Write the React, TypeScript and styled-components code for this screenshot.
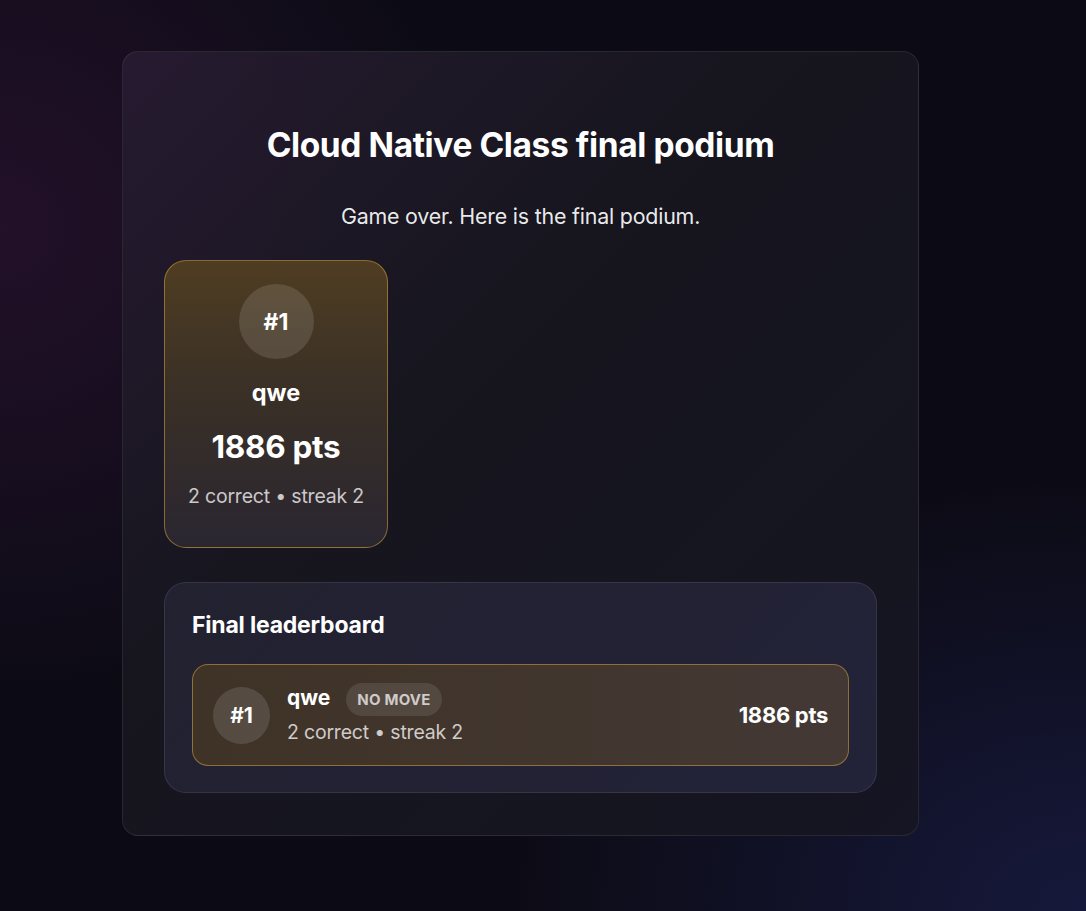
import React from "react";
import styled, { createGlobalStyle } from "styled-components";

const Global = createGlobalStyle`
  html, body { margin: 0; padding: 0; }
  body {
    min-height: 911px;
    background:
      radial-gradient(ellipse 650px 650px at 0% 25%, rgba(50, 20, 55, 0.6), transparent 72%),
      radial-gradient(ellipse 800px 600px at 100% 100%, rgba(28, 32, 80, 0.65), transparent 72%),
      #0c0b15;
    font-family: Inter, "Noto Sans", sans-serif;
    color: #fff;
  }
`;

const Page = styled.div`
  padding: 51px 0 40px 122px;
`;

const Card = styled.main`
  width: 797px;
  box-sizing: border-box;
  border: 1px solid rgba(255, 255, 255, 0.08);
  border-radius: 16px;
  background: linear-gradient(135deg, rgba(40, 28, 50, 0.9) 0%, rgba(24, 23, 32, 0.9) 40%, rgba(22, 22, 34, 0.9) 100%);
  padding: 73px 41px 42px;
  display: flex;
  flex-direction: column;
`;

const Title = styled.h1`
  margin: 0;
  text-align: center;
  font-size: 33.5px;
  font-weight: 700;
  letter-spacing: -0.4px;
  line-height: 40px;
`;

const Subtitle = styled.p`
  margin: 37px 0 0;
  text-align: center;
  font-size: 21.4px;
  line-height: 28px;
  color: rgba(255, 255, 255, 0.92);
  letter-spacing: -0.2px;
`;

const PodiumRow = styled.div`
  display: flex;
  gap: 16px;
  margin-top: 30px;
`;

const PodiumCard = styled.div`
  width: 224px;
  height: 288px;
  box-sizing: border-box;
  border-radius: 22px;
  border: 1px solid rgba(196, 152, 62, 0.6);
  background: linear-gradient(180deg, #4f3d22 0%, #3a3026 45%, #2a2631 100%);
  display: flex;
  flex-direction: column;
  align-items: center;
  padding-top: 23px;
`;

const RankCircle = styled.div<{ $size: number; $font: number }>`
  width: ${(p) => p.$size}px;
  height: ${(p) => p.$size}px;
  border-radius: 50%;
  background: rgba(255, 255, 255, 0.12);
  display: flex;
  align-items: center;
  justify-content: center;
  font-weight: 700;
  font-size: ${(p) => p.$font}px;
  flex-shrink: 0;
`;

const PodiumName = styled.div`
  margin-top: 20px;
  font-size: 23.5px;
  font-weight: 700;
  line-height: 28px;
`;

const PodiumPoints = styled.div`
  margin-top: 22px;
  font-size: 31.5px;
  font-weight: 700;
  line-height: 36px;
  letter-spacing: -0.3px;
`;

const Stats = styled.div<{ $size: number }>`
  font-size: ${(p) => p.$size}px;
  color: rgba(255, 255, 255, 0.75);
  line-height: 24px;
  letter-spacing: -0.2px;
`;

const PodiumStats = styled(Stats)`
  margin-top: 19px;
`;

const Board = styled.section`
  margin-top: 34px;
  border-radius: 22px;
  border: 1px solid rgba(255, 255, 255, 0.09);
  background: linear-gradient(135deg, rgba(80, 75, 110, 0.22), rgba(70, 72, 120, 0.28));
  padding: 27px 27px 26px;
`;

const BoardTitle = styled.h2`
  margin: 0;
  font-size: 23px;
  font-weight: 700;
  line-height: 30px;
  letter-spacing: -0.2px;
`;

const Row = styled.div`
  margin-top: 24px;
  height: 102px;
  box-sizing: border-box;
  border-radius: 16px;
  border: 1px solid rgba(196, 152, 62, 0.6);
  background: linear-gradient(90deg, #3f3327, #433834);
  display: flex;
  align-items: center;
  padding: 0 20px;
  gap: 17px;
`;

const RowInfo = styled.div`
  flex: 1;
  display: flex;
  flex-direction: column;
  gap: 4px;
  margin-top: -4px;
`;

const NameLine = styled.div`
  display: flex;
  align-items: center;
  gap: 16px;
`;

const RowName = styled.span`
  font-size: 21px;
  font-weight: 700;
  line-height: 26px;
  margin-top: -3px;
`;

const Badge = styled.span`
  padding: 0 11px;
  height: 33px;
  display: inline-flex;
  align-items: center;
  border-radius: 999px;
  background: rgba(255, 255, 255, 0.1);
  color: rgba(255, 255, 255, 0.72);
  font-size: 15px;
  font-weight: 700;
  letter-spacing: 0.2px;
`;

const RowPoints = styled.div`
  font-size: 22px;
  font-weight: 700;
  letter-spacing: -0.3px;
`;

export default function App() {
  return (
    <>
      <Global />
      <Page>
        <Card>
          <Title>Cloud Native Class final podium</Title>
          <Subtitle>Game over. Here is the final podium.</Subtitle>
          <PodiumRow>
            <PodiumCard>
              <RankCircle $size={75} $font={23}>#1</RankCircle>
              <PodiumName>qwe</PodiumName>
              <PodiumPoints>1886 pts</PodiumPoints>
              <PodiumStats $size={19.5}>2 correct • streak 2</PodiumStats>
            </PodiumCard>
          </PodiumRow>
          <Board>
            <BoardTitle>Final leaderboard</BoardTitle>
            <Row>
              <RankCircle $size={57} $font={21}>#1</RankCircle>
              <RowInfo>
                <NameLine>
                  <RowName>qwe</RowName>
                  <Badge>NO MOVE</Badge>
                </NameLine>
                <Stats $size={19.5}>2 correct • streak 2</Stats>
              </RowInfo>
              <RowPoints>1886 pts</RowPoints>
            </Row>
          </Board>
        </Card>
      </Page>
    </>
  );
}
